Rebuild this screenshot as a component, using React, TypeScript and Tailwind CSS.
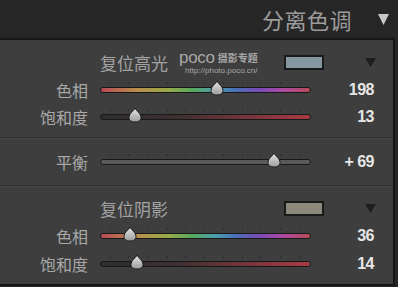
import React from 'react';

const HUE = 'bg-[linear-gradient(90deg,#b84a55_0%,#b8904a_18%,#98aa48_32%,#58a860_44%,#4aa0a8_54%,#4a72b8_64%,#7a4ab8_76%,#b04aa0_88%,#b84a55_100%)]';
const SAT = 'bg-[linear-gradient(90deg,#2e2e2e_0%,#3c2f30_35%,#a83a45_100%)]';
const BAL = 'bg-[#5a5a5a]';

const cjk = "font-['Noto_Sans_CJK_SC','Noto_Sans',sans-serif]";

const Thumb = ({ left }: { left: number }) => (
  <svg
    width="16"
    height="16"
    viewBox="0 0 16 16"
    className="absolute top-[-7px]"
    style={{ left: left - 8 }}
  >
    <defs>
      <linearGradient id="tg" x1="0" y1="0" x2="0" y2="1">
        <stop offset="0" stopColor="#e6e6e6" />
        <stop offset="1" stopColor="#9c9c9c" />
      </linearGradient>
    </defs>
    <path d="M8 1 C9 3.5 14 6.5 14 10.5 C14 13.5 11.5 15 8 15 C4.5 15 2 13.5 2 10.5 C2 6.5 7 3.5 8 1 Z" fill="url(#tg)" stroke="#1c1c1c" strokeWidth="1" />
  </svg>
);

const Slider = ({ track, pos }: { track: string; pos: number }) => (
  <div className="relative w-[211px] h-[6px]">
    <div className="absolute left-0 right-0 top-[-5px] h-[2px]">
      {[10, 28, 47, 67, 85, 103, 123, 142, 160, 180, 200].map(x => (
        <span key={x} className="absolute top-0 w-px h-[2px] bg-[#2a2a2a]" style={{ left: x }} />
      ))}
    </div>
    <div className={`h-[6px] rounded-full border border-[#181818] ${track}`} />
    <Thumb left={pos} />
  </div>
);

const Row = ({ label, track, pos, value }: { label: string; track: string; pos: number; value: string }) => (
  <div className="flex items-center h-[27px]">
    <div className={`w-[88px] text-right text-[16px] leading-none text-[#a8a8a8] ${cjk}`}>{label}</div>
    <div className="ml-[12px]">
      <Slider track={track} pos={pos} />
    </div>
    <div className="w-[63px] text-right font-['Liberation_Sans',sans-serif] font-bold text-[16px] tracking-[-0.5px] leading-none text-[#e6e6e6]">
      {value}
    </div>
  </div>
);

const TitleRow = ({ title, swatch, watermark }: { title: string; swatch: string; watermark?: boolean }) => (
  <div className="flex items-center h-[27px]">
    <div className="ml-[100px] w-[184px] flex items-center">
      <span className={`text-[17px] leading-none text-[#a2a2a2] ${cjk}`}>{title}</span>
      {watermark && (
        <div className="ml-[11px] flex flex-col text-[#a8a8a8]">
          <div className="flex items-center h-[13px]">
            <span className="font-['Liberation_Sans',sans-serif] text-[17px] leading-[13px] tracking-[-0.3px]">poco</span>
            <span className={`ml-[3px] mt-[2px] text-[10px] font-bold leading-none ${cjk}`}>摄影专题</span>
          </div>
          <span className="ml-[6px] mt-[3px] font-['Liberation_Sans',sans-serif] text-[8px] leading-[8px]">http://photo.poco.cn/</span>
        </div>
      )}
    </div>
    <div className="w-[40px] h-[15px] border-2 border-[#1a1a1a]" style={{ background: swatch }} />
    <svg width="11" height="9" viewBox="0 0 11 9" className="ml-[41px]">
      <path d="M0 0 L11 0 L5.5 9 Z" fill="#1e1e1e" />
    </svg>
  </div>
);

const Divider = () => (
  <div>
    <div className="h-px bg-[#2c2c2c]" />
    <div className="h-px bg-[#474747]" />
  </div>
);

export default function App() {
  return (
    <div className="w-[398px] h-[287px] bg-[#262626] overflow-hidden">
      <div className="h-[38px] flex items-center justify-end pr-[9px]">
        <span className={`text-[22px] leading-none text-[#9c9c9c] tracking-[0.5px] ${cjk}`}>分离色调</span>
        <svg width="11" height="11" viewBox="0 0 11 11" className="ml-[26px]">
          <path d="M0 0 L11 0 L5.5 11 Z" fill="#c8c8c8" />
        </svg>
      </div>
      <div className="w-[395px] h-[248px] bg-[#3e3e3e] border-t-2 border-r-2 border-b-2 border-[#161616]">
        <div className="pt-[9px] pb-[7px]">
          <TitleRow title="复位高光" swatch="#8797a0" watermark />
          <Row label="色相" track={HUE} pos={117} value="198" />
          <Row label="饱和度" track={SAT} pos={35} value="13" />
        </div>
        <Divider />
        <div className="pt-[9px] pb-[10px]">
          <Row label="平衡" track={BAL} pos={174} value="+ 69" />
        </div>
        <Divider />
        <div className="pt-[8px]">
          <TitleRow title="复位阴影" swatch="#8d897d" />
          <Row label="色相" track={HUE} pos={30} value="36" />
          <div className="mt-[1px]">
            <Row label="饱和度" track={SAT} pos={37} value="14" />
          </div>
        </div>
      </div>
    </div>
  );
}
